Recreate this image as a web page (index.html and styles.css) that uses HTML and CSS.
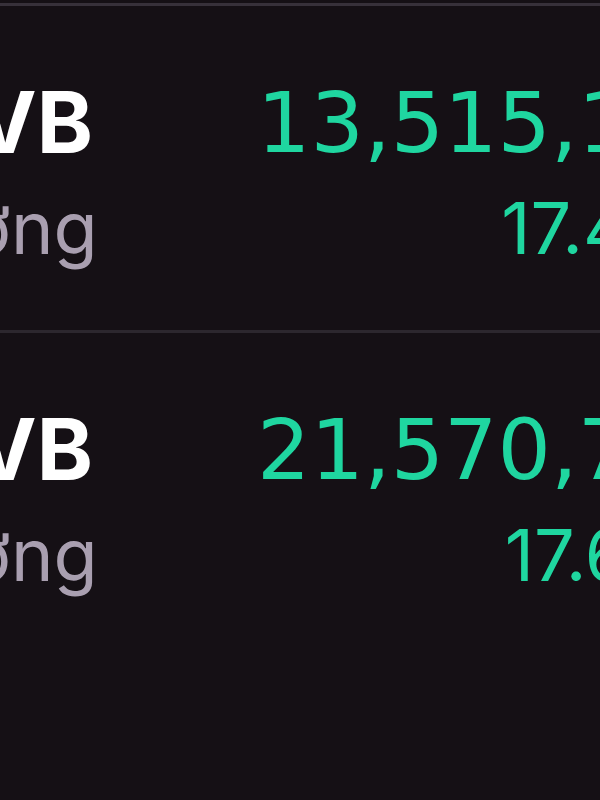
FILE: index.html
```html
<!DOCTYPE html>
<html lang="vi">
<head>
    <meta charset="UTF-8">
    <meta name="viewport" content="width=device-width, initial-scale=1.0">
    <title>Tài khoản</title>
    <link rel="stylesheet" href="styles.css">
</head>
<body>
    <div class="danhsach">
        <section class="dong">
            <div class="ten">
                <p class="ma">MVB</p>
                <p class="phu">Dương</p>
            </div>
            <div class="gia">
                <p class="tong">13,515,120</p>
                <p class="tyle">17.45%</p>
            </div>
        </section>
        <section class="dong">
            <div class="ten">
                <p class="ma">MVB</p>
                <p class="phu">Dương</p>
            </div>
            <div class="gia">
                <p class="tong">21,570,720</p>
                <p class="tyle">17.62%</p>
            </div>
        </section>
    </div>
</body>
</html>
```

FILE: styles.css
```css
html, body{
    margin: 0;
    background: #151015;
    overflow: hidden;
}
p{
    margin: 0;
    white-space: nowrap;
}
.danhsach{
    margin-top: 3px;
    margin-left: -150px;
    width: 888px;
    border-top: 3px solid #37313a;
}
.dong{
    display: flex;
    justify-content: space-between;
    padding-top: 67px;
    padding-bottom: 47px;
    border-bottom: 3px solid #2c272e;
}
.dong:last-child{
    border-bottom: none;
}
.ten{
    padding-left: 44px;
}
.ma{
    font-family: Inter, sans-serif;
    font-weight: 700;
    font-size: 85px;
    line-height: 100px;
    color: #ffffff;
}
.phu{
    margin-left: -20px;
    font-family: Inter, sans-serif;
    font-size: 72px;
    line-height: 110px;
    color: #a99fb0;
}
.gia{
    text-align: right;
    color: #1fd6a0;
}
.tong{
    font-family: "DejaVu Sans", sans-serif;
    font-size: 84px;
    line-height: 100px;
}
.tyle{
    margin-right: -6px;
    font-family: Inter, sans-serif;
    font-size: 72px;
    line-height: 110px;
}
```
